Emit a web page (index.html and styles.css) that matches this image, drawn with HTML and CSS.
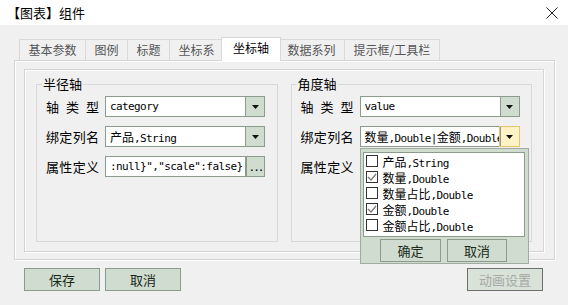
FILE: index.html
```html
<!doctype html>
<html>
  <head>
    <title>【图表】组件</title>
    <link rel="stylesheet" href="styles.css">
  </head>
  <body>
    <div class="titlebar">
      <span>【图表】组件</span>
      <svg class="close" width="12" height="12" viewBox="0 0 12 12"><path d="M0.5 0.5L11.5 11.5M11.5 0.5L0.5 11.5" stroke="#222" stroke-width="1"/></svg>
    </div>
    <div class="dialog">
      <div class="tabs">
        <span class="tab">基本参数</span>
        <span class="tab">图例</span>
        <span class="tab">标题</span>
        <span class="tab">坐标系</span>
        <span class="tab sel">坐标轴</span>
        <span class="tab">数据系列</span>
        <span class="tab">提示框/工具栏</span>
      </div>
      <div class="panel">
        <div class="inner">
          <fieldset class="group">
            <legend>半径轴</legend>
            <div class="row">
              <span class="lbl">轴 类 型</span>
              <div class="combo"><span class="val">category</span><span class="drop"><svg width="7" height="4" viewBox="0 0 7 4"><path d="M0 0H7L3.5 4Z" fill="#111"/></svg></span></div>
            </div>
            <div class="row">
              <span class="lbl">绑定列名</span>
              <div class="combo"><span class="val"><span class="zh">产品</span>,String</span><span class="drop"><svg width="7" height="4" viewBox="0 0 7 4"><path d="M0 0H7L3.5 4Z" fill="#111"/></svg></span></div>
            </div>
            <div class="row">
              <span class="lbl">属性定义</span>
              <div class="field"><span class="val">:null}","scale":false}</span></div>
              <span class="more">...</span>
            </div>
          </fieldset>
          <fieldset class="group">
            <legend>角度轴</legend>
            <div class="row">
              <span class="lbl">轴 类 型</span>
              <div class="combo"><span class="val">value</span><span class="drop"><svg width="7" height="4" viewBox="0 0 7 4"><path d="M0 0H7L3.5 4Z" fill="#111"/></svg></span></div>
            </div>
            <div class="row">
              <span class="lbl">绑定列名</span>
              <div class="combo open">
                <span class="val"><span class="zh">数量</span>,Double|<span class="zh">金额</span>,Double</span>
                <span class="drop hot"><svg width="7" height="4" viewBox="0 0 7 4"><path d="M0 0H7L3.5 4Z" fill="#111"/></svg></span>
                <div class="popup">
                  <div class="list">
                    <div class="item"><span class="cb"></span><span><span class="zh">产品</span>,String</span></div>
                    <div class="item"><span class="cb"><svg width="10" height="10" viewBox="0 0 10 10"><path d="M1 5L4 8L9 2" fill="none" stroke="#7a7a7a" stroke-width="1.2"/></svg></span><span><span class="zh">数量</span>,Double</span></div>
                    <div class="item"><span class="cb"></span><span><span class="zh">数量占比</span>,Double</span></div>
                    <div class="item"><span class="cb"><svg width="10" height="10" viewBox="0 0 10 10"><path d="M1 5L4 8L9 2" fill="none" stroke="#7a7a7a" stroke-width="1.2"/></svg></span><span><span class="zh">金额</span>,Double</span></div>
                    <div class="item"><span class="cb"></span><span><span class="zh">金额占比</span>,Double</span></div>
                  </div>
                  <div class="pbtns">
                    <span class="btn pbtn">确定</span>
                    <span class="btn pbtn">取消</span>
                  </div>
                </div>
              </div>
            </div>
            <div class="row">
              <span class="lbl">属性定义</span>
              <div class="field"><span class="val"></span></div>
              <span class="more">...</span>
            </div>
          </fieldset>
        </div>
      </div>
      <div class="actions">
        <div class="left">
          <span class="btn">保存</span>
          <span class="btn">取消</span>
        </div>
        <span class="btn off">动画设置</span>
      </div>
    </div>
  </body>
</html>
```

FILE: styles.css
```css
BODY {margin: 0; width: 568px; height: 305px; overflow: hidden; background: #f0f0f0; color: #000; font: 13px "Noto Sans CJK SC", sans-serif;}

.titlebar {height: 25px; background: #fff; display: flex; align-items: center; justify-content: space-between; padding: 0 10px 0 7px;}
.close {display: block;}

.dialog {padding: 12px 13px 0 14px;}

.tabs {display: flex; align-items: flex-end; height: 23px; padding-left: 5px;}
.tab {height: 21px; box-sizing: border-box; border: 1px solid #d9d9d9; border-bottom: none; margin-left: -1px; padding: 0 8.5px; font-size: 12px; line-height: 19px; color: #555; background: #f0f0f0;}
.tab:first-child {margin-left: 0;}
.tab.sel {position: relative; z-index: 1; height: 24px; margin: 0 -2px -1px -3px; padding: 0 11px; line-height: 20px; background: #fff; color: #000;}

.panel {height: 200px; box-sizing: border-box; display: flex; border: 1px solid #d5d5d5; padding: 8px 10px 7px 9px; box-shadow: inset 1px 1px 0 #fff, 1px 1px 0 #fff;}
.inner {flex: 1; display: flex; gap: 13px; border: 1px solid #d5d5d5; padding: 6px 11px 9px; box-shadow: inset 1px 1px 0 #fff, 1px 1px 0 #fff;}

.group {flex: 1; min-width: 0; margin: 0; padding: 4px 11px 0 9px; border: 1px solid #d8d8d8; display: flex; flex-direction: column; gap: 9px;}
.group legend {margin-left: -4px; padding: 0 1px; font-size: 13px; line-height: 16px;}

.row {display: flex; align-items: center; height: 21px;}
.lbl {width: 53px; margin-right: 6px; text-align-last: justify; white-space: nowrap;}

.combo {position: relative; width: 160px; height: 21px; box-sizing: border-box; display: flex; border: 1px solid #8c9c8c; background: #fff;}
.field {width: 141px; height: 21px; box-sizing: border-box; display: flex; border: 1px solid #8c9c8c; background: #fff;}
.val {flex: 1; min-width: 0; overflow: hidden; white-space: nowrap; padding-left: 4px; font: 11px "DejaVu Sans Mono", monospace; letter-spacing: -0.6px; line-height: 19px;}
.val .zh {font-size: 12px; letter-spacing: 0;}
.zh {font-family: "Noto Sans CJK SC", sans-serif;}
.drop {width: 18px; flex: none; display: flex; align-items: center; justify-content: center; border-left: 1px solid #8c9c8c; background: #d0dcd0;}
.drop.hot {background: #fff2c4; box-shadow: 0 0 0 1px #e6c46e;}
.more {width: 19px; height: 21px; box-sizing: border-box; border: 1px solid #8c9c8c; background: #d0dcd0; font: 11px "DejaVu Sans Mono", monospace; line-height: 22px; text-align: center; letter-spacing: -2px;}

.popup {position: absolute; z-index: 2; left: -1px; top: 21px; width: 169px; height: 116px; box-sizing: border-box; border: 1px solid #a0aca0; background: #d0dcd0; padding: 3px 3px 0 2px;}
.list {height: 85px; box-sizing: border-box; border: 1px solid #8c9c8c; background: #fff; padding-left: 2px;}
.item {height: 16px; display: flex; align-items: center; gap: 5px; font: 11px "DejaVu Sans Mono", monospace; letter-spacing: -0.6px; white-space: nowrap;}
.item .zh {font-size: 12px; letter-spacing: 0;}
.cb {width: 12px; height: 12px; box-sizing: border-box; border: 1px solid #333; background: #fff; display: flex; align-items: center; justify-content: center;}
.cb svg {display: block;}
.pbtns {display: flex; justify-content: center; gap: 6px; margin-top: 2px;}

.btn {height: 23px; box-sizing: border-box; width: 76px; display: flex; align-items: center; justify-content: center; border: 1px solid #8c9c8c; background: #cfdccf; color: #1a2a1a; font-size: 13px;}
.pbtn {width: 61px;}
.pbtn + .pbtn {width: 60px;}
.btn.off {border-color: #6e6e6e; background: #d8e2d8; color: #a8a8a8;}

.actions {display: flex; justify-content: space-between; padding: 8px 12px 0 10px;}
.actions .left {display: flex; gap: 5px;}
```
